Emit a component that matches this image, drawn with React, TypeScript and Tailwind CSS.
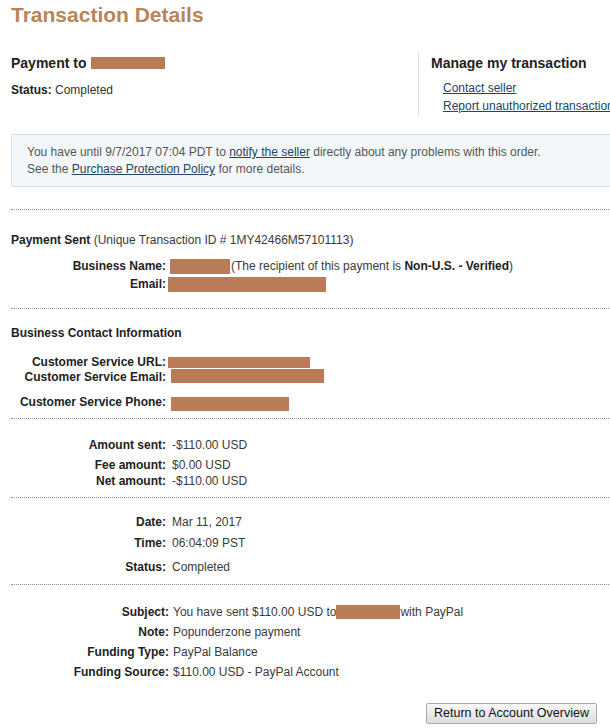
import React from "react";

const R = ({ w, h, mt, ml = 0 }: { w: number; h: number; mt: number; ml?: number }) => (
  <div
    className="shrink-0 bg-[#b97b58]"
    style={{ width: w, height: h, marginTop: mt, marginLeft: ml }}
  />
);

const Dots = ({ mt }: { mt: string }) => (
  <div className={`${mt} h-0 w-[620px] border-t border-dotted border-[#8c8c8c]`} />
);

function Row({
  label,
  children,
  mt,
  h = "h-[16px] leading-[16px]",
  lw = "w-[155px]",
  gap = "pl-[6px]",
}: {
  label: string;
  children?: React.ReactNode;
  mt: string;
  h?: string;
  lw?: string;
  gap?: string;
}) {
  return (
    <div className={`flex items-start ${mt} ${h}`}>
      <div className={`${lw} shrink-0 text-right font-bold text-[#222]`}>{label}</div>
      <div className={`flex items-start whitespace-nowrap text-[#3a3a3a] ${gap}`}>{children}</div>
    </div>
  );
}

export default function App() {
  return (
    <div
      className="w-[610px] h-[728px] overflow-hidden bg-white text-[12px] text-[#333]"
      style={{ fontFamily: '"Liberation Sans", Arial, sans-serif' }}
    >
      <div className="w-[640px] pl-[11px]">
        {/* Title */}
        <div className="h-[30px] text-[21px] font-bold leading-[30px] text-[#b8845a]">
          Transaction Details
        </div>

        {/* Header row */}
        <div className="mt-[23px] flex items-start">
          <div className="w-[407px] shrink-0">
            <div className="flex h-[20px] items-start text-[14px] font-bold leading-[20px] text-[#222]">
              <span>Payment to</span>
              <R w={74} h={12} mt={4} ml={5} />
            </div>
            <div className="mt-[9px] h-[16px] leading-[16px]">
              <span className="font-bold text-[#222]">Status:</span> Completed
            </div>
          </div>
          <div className="h-[62px] whitespace-nowrap border-l border-[#dcdcdc] pl-[12px]">
            <div className="h-[20px] text-[14px] font-bold leading-[20px] text-[#222]">
              Manage my transaction
            </div>
            <div className="mt-[6px] pl-[12px] leading-[18px] text-[#234466]">
              <div>
                <a className="underline">Contact seller</a>
              </div>
              <div>
                <a className="underline">Report unauthorized transaction</a>
              </div>
            </div>
          </div>
        </div>

        {/* Info box */}
        <div className="mt-[19px] w-[610px] rounded-[3px] border border-[#d6dee7] bg-[#f4f7fa] pb-[8px] pl-[15px] pt-[9px] leading-[17px] text-[#555]">
          <div>
            You have until 9/7/2017 07:04 PDT to{" "}
            <a className="text-[#234466] underline">notify the seller</a> directly about any
            problems with this order.
          </div>
          <div>
            See the <a className="text-[#234466] underline">Purchase Protection Policy</a> for
            more details.
          </div>
        </div>

        <Dots mt="mt-[22px]" />

        {/* Payment sent */}
        <div className="mt-[22px] h-[16px] leading-[16px] text-[#3a3a3a]">
          <span className="font-bold text-[#222]">Payment Sent</span> (Unique Transaction ID #
          1MY42466M57101113)
        </div>
        <Row label="Business Name:" mt="mt-[10px]" gap="pl-[4px]">
          <R w={60} h={15} mt={1} />
          <span className="pl-[1px]">
            (The recipient of this payment is <b className="text-[#222]">Non-U.S. - Verified</b>)
          </span>
        </Row>
        <Row label="Email:" mt="mt-[2px]" gap="pl-[2px]">
          <R w={158} h={15} mt={1} />
        </Row>

        <Dots mt="mt-[16px]" />

        {/* Business contact */}
        <div className="mt-[16px] h-[16px] font-bold leading-[16px] text-[#222]">
          Business Contact Information
        </div>
        <Row label="Customer Service URL:" mt="mt-[14px]" h="h-[15px] leading-[15px]" gap="pl-[2px]">
          <R w={142} h={11} mt={2} />
        </Row>
        <Row label="Customer Service Email:" mt="mt-[0px]" h="h-[15px] leading-[15px]" gap="pl-[5px]">
          <R w={153} h={14} mt={-1} />
        </Row>
        <Row label="Customer Service Phone:" mt="mt-[9px]" gap="pl-[5px]">
          <R w={118} h={14} mt={3} />
        </Row>

        <Dots mt="mt-[8px]" />

        {/* Amounts */}
        <Row label="Amount sent:" mt="mt-[18px]">-$110.00 USD</Row>
        <Row label="Fee amount:" mt="mt-[4px]">$0.00 USD</Row>
        <Row label="Net amount:" mt="mt-[0px]">-$110.00 USD</Row>

        <Dots mt="mt-[8px]" />

        {/* Date */}
        <Row label="Date:" mt="mt-[16px]">Mar 11, 2017</Row>
        <Row label="Time:" mt="mt-[5px]">06:04:09 PST</Row>
        <Row label="Status:" mt="mt-[8px]">Completed</Row>

        <Dots mt="mt-[9px]" />

        {/* Subject */}
        <Row label="Subject:" mt="mt-[19px]" lw="w-[158px]" gap="pl-[4px]">
          <span>You have sent $110.00 USD to</span>
          <R w={64} h={14} mt={1} />
          <span>with PayPal</span>
        </Row>
        <Row label="Note:" mt="mt-[4px]" lw="w-[158px]" gap="pl-[4px]">
          Popunderzone payment
        </Row>
        <Row label="Funding Type:" mt="mt-[4px]" lw="w-[158px]" gap="pl-[4px]">
          PayPal Balance
        </Row>
        <Row label="Funding Source:" mt="mt-[4px]" lw="w-[158px]" gap="pl-[4px]">
          $110.00 USD - PayPal Account
        </Row>

        {/* Button */}
        <div className="mt-[23px] flex w-[586px] justify-end">
          <button className="h-[21px] w-[171px] rounded-[2px] border border-[#a9a9a9] bg-gradient-to-b from-[#f8f8f8] to-[#dddddd] text-[12.5px] leading-[19px] text-[#111]">
            Return to Account Overview
          </button>
        </div>
      </div>
    </div>
  );
}
